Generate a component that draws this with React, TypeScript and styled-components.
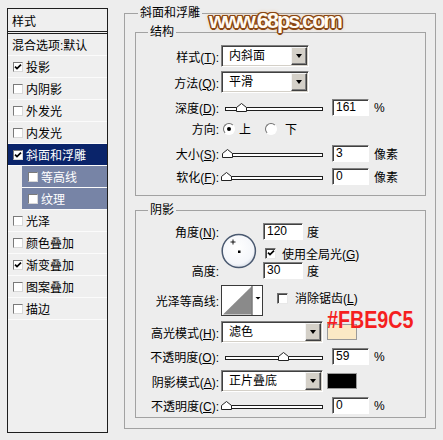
import styled, { createGlobalStyle } from "styled-components";

const FONT = `"Liberation Sans", "Noto Sans CJK SC", sans-serif`;

const GlobalStyle = createGlobalStyle`
  html, body { margin: 0; padding: 0; }
  body {
    background: #ededed;
    font-family: ${FONT};
    font-size: 12px;
    color: #000;
  }
`;

type Effect = { name: string; checked: boolean; selected?: boolean; sub?: boolean };

const effects: Effect[] = [
  { name: "投影", checked: true },
  { name: "内阴影", checked: false },
  { name: "外发光", checked: false },
  { name: "内发光", checked: false },
  { name: "斜面和浮雕", checked: true, selected: true },
  { name: "等高线", checked: false, sub: true },
  { name: "纹理", checked: false, sub: true },
  { name: "光泽", checked: false },
  { name: "颜色叠加", checked: false },
  { name: "渐变叠加", checked: true },
  { name: "图案叠加", checked: false },
  { name: "描边", checked: false },
];

function Tick() {
  return (
    <svg width="8" height="8" viewBox="0 0 8 8">
      <path d="M1 3.6 L3 5.6 L7 1.6" fill="none" stroke="#000" strokeWidth="1.7" />
    </svg>
  );
}

// value is 0..1 along the track
function Slider({ value }: { value: number }) {
  return (
    <SliderBox>
      <Track />
      <Thumb style={{ left: `${value * 97 - 4.5}px` }} width="11" height="9" viewBox="0 0 11 9">
        <polygon points="0.5,8.5 0.5,4.5 5.5,0.5 10.5,4.5 10.5,8.5" fill="#fff" stroke="#222" />
      </Thumb>
    </SliderBox>
  );
}

function Dropdown({ text, width }: { text: string; width: number }) {
  return (
    <Select $w={width}>
      <SelectText>{text}</SelectText>
      <SelectButton>
        <Arrow />
      </SelectButton>
    </Select>
  );
}

export default function App() {
  return (
    <Page>
      <GlobalStyle />
      <StyleList>
        <ListHeader>样式</ListHeader>
        <ListItem>混合选项:默认</ListItem>
        {effects.map((e) => (
          <ListItem key={e.name} $selected={e.selected} $sub={e.sub} $check>
            <ListCheck>{e.checked && <Tick />}</ListCheck>
            <span>{e.name}</span>
          </ListItem>
        ))}
      </StyleList>

      <OuterGroup>
        <Legend $ml={3}>斜面和浮雕</Legend>

        <InnerGroup $mt={0} $pb={10}>
          <Legend $ml={12}>结构</Legend>
          <FormRow $h={22} $mt={0}>
            <Label>样式(<u>T</u>):</Label>
            <Dropdown text="内斜面" width={88} />
          </FormRow>
          <FormRow $h={22} $mt={4}>
            <Label>方法(<u>Q</u>):</Label>
            <Dropdown text="平滑" width={88} />
          </FormRow>
          <FormRow $h={17} $mt={6}>
            <Label>深度(<u>D</u>):</Label>
            <Slider value={0.161} />
            <Field $w={37}>161</Field>
            <Unit>%</Unit>
          </FormRow>
          <FormRow $h={17} $mt={4}>
            <Label>方向:</Label>
            <Radio $on $ml={2} />
            <RadioText $ml={4}>上</RadioText>
            <Radio $ml={14} />
            <RadioText $ml={8}>下</RadioText>
          </FormRow>
          <FormRow $h={17} $mt={8}>
            <Label>大小(<u>S</u>):</Label>
            <Slider value={0.012} />
            <Field $w={37}>3</Field>
            <Unit>像素</Unit>
          </FormRow>
          <FormRow $h={17} $mt={6}>
            <Label>软化(<u>F</u>):</Label>
            <Slider value={0} />
            <Field $w={37}>0</Field>
            <Unit>像素</Unit>
          </FormRow>
        </InnerGroup>

        <InnerGroup $mt={7} $pb={3}>
          <Legend $ml={12}>阴影</Legend>
          <AngleGrid>
            <GridLabel $row="1">角度(<u>N</u>):</GridLabel>
            <Dial width="36" height="36" viewBox="0 0 36 36">
              <defs>
                <radialGradient id="dialFill" cx="45%" cy="40%" r="65%">
                  <stop offset="0" stopColor="#ffffff" />
                  <stop offset="0.75" stopColor="#f4f6fa" />
                  <stop offset="1" stopColor="#cfd6e2" />
                </radialGradient>
              </defs>
              <circle cx="17.8" cy="18" r="16.6" fill="url(#dialFill)" stroke="#4a5970" strokeWidth="1.5" />
              <rect x="17" y="17.5" width="2.5" height="2.5" fill="#000" />
              <path d="M12 6.5 v5 M9.5 9 h5" stroke="#000" strokeWidth="0.9" />
            </Dial>
            <GridCell $row="1">
              <Field $w={40} $ml={0}>120</Field>
              <Unit $ml={4}>度</Unit>
            </GridCell>
            <GridCell $row="2" $mt={4}>
              <FormCheck $ml={2}>
                <Tick />
              </FormCheck>
              <CheckText $ml={6}>
                使用全局光(<u>G</u>)
              </CheckText>
            </GridCell>
            <GridLabel $row="3">高度:</GridLabel>
            <GridCell $row="3">
              <Field $w={40} $ml={0}>30</Field>
              <Unit $ml={4}>度</Unit>
            </GridCell>
          </AngleGrid>

          <FormRow $h={30} $mt={6}>
            <Label>光泽等高线:</Label>
            <svg width="42" height="31" viewBox="0 0 42 31">
              <rect x="0.5" y="0.5" width="41" height="30" fill="#fff" stroke="#3a3a3a" />
              <polygon points="2,29.5 30.5,1.5 30.5,29.5" fill="#8a8a8a" />
              <line x1="31" y1="1" x2="31" y2="30" stroke="#3a3a3a" />
              <polygon points="34.5,12 39.5,12 37,14.5" fill="#000" />
            </svg>
            <FormCheck $ml={14} $mb={3} />
            <CheckText $ml={7} $tight>
              消除锯齿(<u>L</u>)
            </CheckText>
          </FormRow>

          <FormRow $h={22} $mt={6}>
            <Label>高光模式(<u>H</u>):</Label>
            <Dropdown text="滤色" width={102} />
            <Swatch $color="#fbe9c5">
              <Annotation>#FBE9C5</Annotation>
            </Swatch>
          </FormRow>
          <FormRow $h={17} $mt={5}>
            <Label>不透明度(<u>O</u>):</Label>
            <Slider value={0.59} />
            <Field $w={37}>59</Field>
            <Unit>%</Unit>
          </FormRow>
          <FormRow $h={22} $mt={5}>
            <Label>阴影模式(<u>A</u>):</Label>
            <Dropdown text="正片叠底" width={102} />
            <Swatch $color="#000" />
          </FormRow>
          <FormRow $h={17} $mt={5}>
            <Label>不透明度(<u>C</u>):</Label>
            <Slider value={0} />
            <Field $w={37}>0</Field>
            <Unit>%</Unit>
          </FormRow>
        </InnerGroup>
      </OuterGroup>

      <Watermark>www.68ps.com</Watermark>
    </Page>
  );
}

const Page = styled.div`
  position: relative;
  display: flex;
  align-items: flex-start;
  width: 443px;
  height: 440px;
  box-sizing: border-box;
  padding: 6px 0 0 7px;
  overflow: hidden;
`;

const StyleList = styled.div`
  display: flex;
  flex-direction: column;
  width: 101px;
  height: 425px;
  margin-top: 2px;
  box-sizing: border-box;
  border: 1px solid #1e1e1e;
  background: #efefef;
  flex-shrink: 0;
`;

const ListHeader = styled.div`
  display: flex;
  align-items: center;
  height: 25px;
  box-sizing: border-box;
  padding-left: 4px;
  border-bottom: 3px double #1e1e1e;
`;

const ListItem = styled.div<{ $selected?: boolean; $sub?: boolean; $check?: boolean }>`
  display: flex;
  align-items: center;
  height: 22px;
  box-sizing: border-box;
  padding-left: ${(p) => (p.$sub ? 6 : p.$check ? 5 : 4)}px;
  margin-left: ${(p) => (p.$sub ? 14 : 0)}px;
  border-bottom: 1px solid #fbfbfb;
  white-space: nowrap;
  background: ${(p) => (p.$selected ? "#0a246a" : p.$sub ? "#7784a6" : "transparent")};
  color: ${(p) => (p.$selected || p.$sub ? "#fff" : "#000")};
`;

const ListCheck = styled.span`
  display: inline-flex;
  align-items: center;
  justify-content: center;
  width: 10px;
  height: 10px;
  box-sizing: border-box;
  margin-right: 3px;
  background: #fff;
  border: 1px solid;
  border-color: #7a7a7a #d8d8d8 #d8d8d8 #7a7a7a;
`;

const OuterGroup = styled.fieldset`
  width: 312px;
  min-width: 0;
  box-sizing: border-box;
  margin: 0 0 0 16px;
  padding: 5px 9px 10px 10px;
  border: 1px solid #a2a2a2;
`;

const Legend = styled.legend<{ $ml: number }>`
  margin-left: ${(p) => p.$ml}px;
  padding: 0 2px;
  line-height: 14px;
  font-size: 12px;
`;

const InnerGroup = styled.fieldset<{ $mt: number; $pb: number }>`
  min-width: 0;
  margin: ${(p) => p.$mt}px 0 0 0;
  padding: 6px 0 ${(p) => p.$pb}px 0;
  border: 1px solid #a2a2a2;
`;

const FormRow = styled.div<{ $h: number; $mt: number }>`
  display: flex;
  align-items: center;
  height: ${(p) => p.$h}px;
  margin-top: ${(p) => p.$mt}px;
  white-space: nowrap;
`;

const Label = styled.span`
  width: 85px;
  flex-shrink: 0;
  box-sizing: border-box;
  padding-right: 2px;
  text-align: right;
  white-space: nowrap;
`;

const Select = styled.div<{ $w: number }>`
  display: flex;
  align-items: center;
  width: ${(p) => p.$w}px;
  height: 22px;
  box-sizing: border-box;
  background: #fff;
  border: 1px solid;
  border-color: #808080 #fff #fff #808080;
  box-shadow: inset 1px 1px 0 #404040, inset -1px -1px 0 #d4d0c8;
  padding: 1px;
`;

const SelectText = styled.span`
  flex: 1;
  padding-left: 6px;
  line-height: 18px;
`;

const SelectButton = styled.span`
  display: flex;
  align-items: center;
  justify-content: center;
  width: 16px;
  height: 18px;
  box-sizing: border-box;
  background: #d4d0c8;
  border: 1px solid;
  border-color: #f4f4f4 #404040 #404040 #f4f4f4;
  box-shadow: inset -1px -1px 0 #808080;
`;

const Arrow = styled.span`
  width: 0;
  height: 0;
  border-left: 3.5px solid transparent;
  border-right: 3.5px solid transparent;
  border-top: 4px solid #000;
`;

const SliderBox = styled.div`
  position: relative;
  width: 98px;
  height: 9px;
  margin-left: 4px;
  flex-shrink: 0;
`;

const Track = styled.div`
  margin-top: 4px;
  height: 4px;
  box-sizing: border-box;
  border: 1px solid #1e1e1e;
  background: #fff;
`;

const Thumb = styled.svg`
  position: absolute;
  top: 0;
  display: block;
`;

const Field = styled.div<{ $w: number; $ml?: number }>`
  width: ${(p) => p.$w}px;
  height: 17px;
  margin-left: ${(p) => p.$ml ?? 9}px;
  box-sizing: border-box;
  flex-shrink: 0;
  background: #fff;
  border: 1px solid;
  border-color: #808080 #fff #fff #808080;
  box-shadow: inset 1px 1px 0 #404040;
  padding-left: 3px;
  line-height: 15px;
`;

const Unit = styled.span<{ $ml?: number }>`
  margin-left: ${(p) => p.$ml ?? 5}px;
`;

const Radio = styled.span<{ $on?: boolean; $ml: number }>`
  display: inline-flex;
  align-items: center;
  justify-content: center;
  width: 12px;
  height: 12px;
  margin-left: ${(p) => p.$ml}px;
  box-sizing: border-box;
  border-radius: 50%;
  border: 1px solid;
  border-color: #707070 #fff #fff #707070;
  background: #fff;

  &::after {
    content: "";
    display: ${(p) => (p.$on ? "block" : "none")};
    width: 4px;
    height: 4px;
    border-radius: 50%;
    background: #000;
  }
`;

const RadioText = styled.span<{ $ml: number }>`
  margin-left: ${(p) => p.$ml}px;
`;

const FormCheck = styled.span<{ $ml: number; $mb?: number }>`
  display: inline-flex;
  align-items: center;
  justify-content: center;
  width: 11px;
  height: 11px;
  margin-left: ${(p) => p.$ml}px;
  margin-bottom: ${(p) => p.$mb ?? 0}px;
  box-sizing: border-box;
  flex-shrink: 0;
  background: #fff;
  border: 1px solid;
  border-color: #707070 #e8e8e8 #e8e8e8 #707070;
  box-shadow: inset 1px 1px 0 #404040;
`;

const CheckText = styled.span<{ $ml: number; $tight?: boolean }>`
  margin-left: ${(p) => p.$ml}px;
  ${(p) => p.$tight && "line-height: 12px; margin-bottom: 3px;"}
`;

const AngleGrid = styled.div`
  display: grid;
  grid-template-columns: 85px 42px 1fr;
  grid-template-rows: 17px 22px 17px;
  align-items: center;
`;

const GridLabel = styled(Label)<{ $row: string }>`
  grid-column: 1;
  grid-row: ${(p) => p.$row};
`;

const GridCell = styled.div<{ $row: string; $mt?: number }>`
  grid-column: 3;
  grid-row: ${(p) => p.$row};
  display: flex;
  align-items: center;
  margin-top: ${(p) => p.$mt ?? 0}px;
  white-space: nowrap;
`;

const Dial = styled.svg`
  grid-column: 2;
  grid-row: 1 / 4;
  align-self: center;
  display: block;
`;

const Swatch = styled.div<{ $color: string }>`
  position: relative;
  width: 30px;
  height: 16px;
  margin-left: 4px;
  box-sizing: border-box;
  background: ${(p) => p.$color};
  border: 1px solid #9a9a9a;
`;

const Annotation = styled.span`
  position: absolute;
  left: -1px;
  top: -14px;
  font-family: "Liberation Sans", sans-serif;
  font-weight: bold;
  font-size: 24px;
  line-height: 17px;
  color: #f51f1f;
  transform: scaleX(0.82);
  transform-origin: left center;
  white-space: nowrap;
`;

const Watermark = styled.span`
  position: absolute;
  left: 209px;
  top: 10px;
  font-family: "Liberation Sans", sans-serif;
  font-weight: bold;
  font-size: 22px;
  line-height: 22px;
  letter-spacing: -2.2px;
  color: #fffaf2;
  text-shadow:
    1.5px 0 0 #8a4712, -1.5px 0 0 #8a4712, 0 1.5px 0 #8a4712, 0 -1.5px 0 #8a4712,
    1px 1px 0 #8a4712, -1px -1px 0 #8a4712, 1px -1px 0 #8a4712, -1px 1px 0 #8a4712,
    0 0 4px #e0a060;
  white-space: nowrap;
`;
